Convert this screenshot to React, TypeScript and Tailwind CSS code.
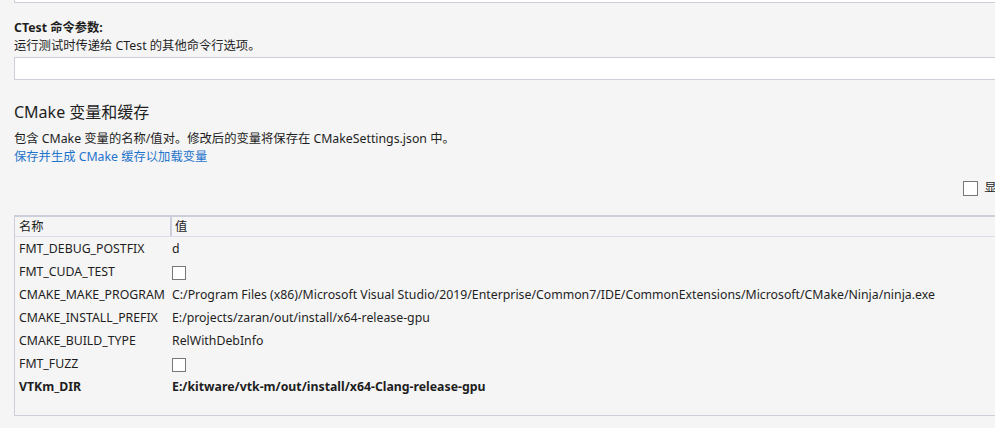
const rows: { name: string; value: string; check?: boolean; bold?: boolean }[] = [
  { name: 'FMT_DEBUG_POSTFIX', value: 'd' },
  { name: 'FMT_CUDA_TEST', value: '', check: true },
  {
    name: 'CMAKE_MAKE_PROGRAM',
    value:
      'C:/Program Files (x86)/Microsoft Visual Studio/2019/Enterprise/Common7/IDE/CommonExtensions/Microsoft/CMake/Ninja/ninja.exe',
  },
  { name: 'CMAKE_INSTALL_PREFIX', value: 'E:/projects/zaran/out/install/x64-release-gpu' },
  { name: 'CMAKE_BUILD_TYPE', value: 'RelWithDebInfo' },
  { name: 'FMT_FUZZ', value: '', check: true },
  { name: 'VTKm_DIR', value: 'E:/kitware/vtk-m/out/install/x64-Clang-release-gpu', bold: true },
];

export default function App() {
  return (
    <div
      className="w-[995px] h-[428px] overflow-hidden bg-[#f5f5f5] text-[12.3px] text-[#1e1e1e]"
      style={{ fontFamily: '"Noto Sans", "Noto Sans CJK SC", sans-serif' }}
    >
      <div className="w-[1044px] ml-[14px] flex flex-col">
        {/* previous field, cut off at top */}
        <div className="h-[3px] bg-white border-x border-b border-[#cccedb]" />

        {/* CTest */}
        <div className="mt-[16px] font-bold leading-[18px]">CTest 命令参数:</div>
        <div className="leading-[18px]">运行测试时传递给 CTest 的其他命令行选项。</div>
        <div className="mt-[2px] h-[23px] bg-white border border-[#cccedb]" />

        {/* CMake vars */}
        <div className="mt-[20px] text-[16px] leading-[24px]">CMake 变量和缓存</div>
        <div className="mt-[6px] leading-[18px]">包含 CMake 变量的名称/值对。修改后的变量将保存在 CMakeSettings.json 中。</div>
        <div className="leading-[18px] text-[#1f74cc]">保存并生成 CMake 缓存以加载变量</div>

        <div className="mt-[13px] flex justify-end items-center gap-[6px]">
          <span className="w-[15px] h-[15px] border border-[#777] bg-white" />
          <span>显示高级变量</span>
        </div>

        {/* table */}
        <div className="mt-[18px] border-t-2 border-l border-b border-[#cccedb] pb-[17px]">
          <div className="flex h-[20px] items-center border-b border-[#dcdce6]">
            <div className="w-[155px] pl-[4px] h-full flex items-center">名称</div>
            <div className="w-[2px] h-full bg-[#cccedb]" />
            <div className="pl-[3px]">值</div>
          </div>
          {rows.map((r) => (
            <div key={r.name} className={`flex h-[23px] items-center ${r.bold ? 'font-bold' : ''}`}>
              <div className="w-[157px] pl-[4px] whitespace-nowrap">{r.name}</div>
              <div className="whitespace-nowrap">
                {r.check ? (
                  <span className="block mt-[3px] w-[14px] h-[14px] border border-[#777] bg-white" />
                ) : (
                  r.value
                )}
              </div>
            </div>
          ))}
        </div>
      </div>
    </div>
  );
}
